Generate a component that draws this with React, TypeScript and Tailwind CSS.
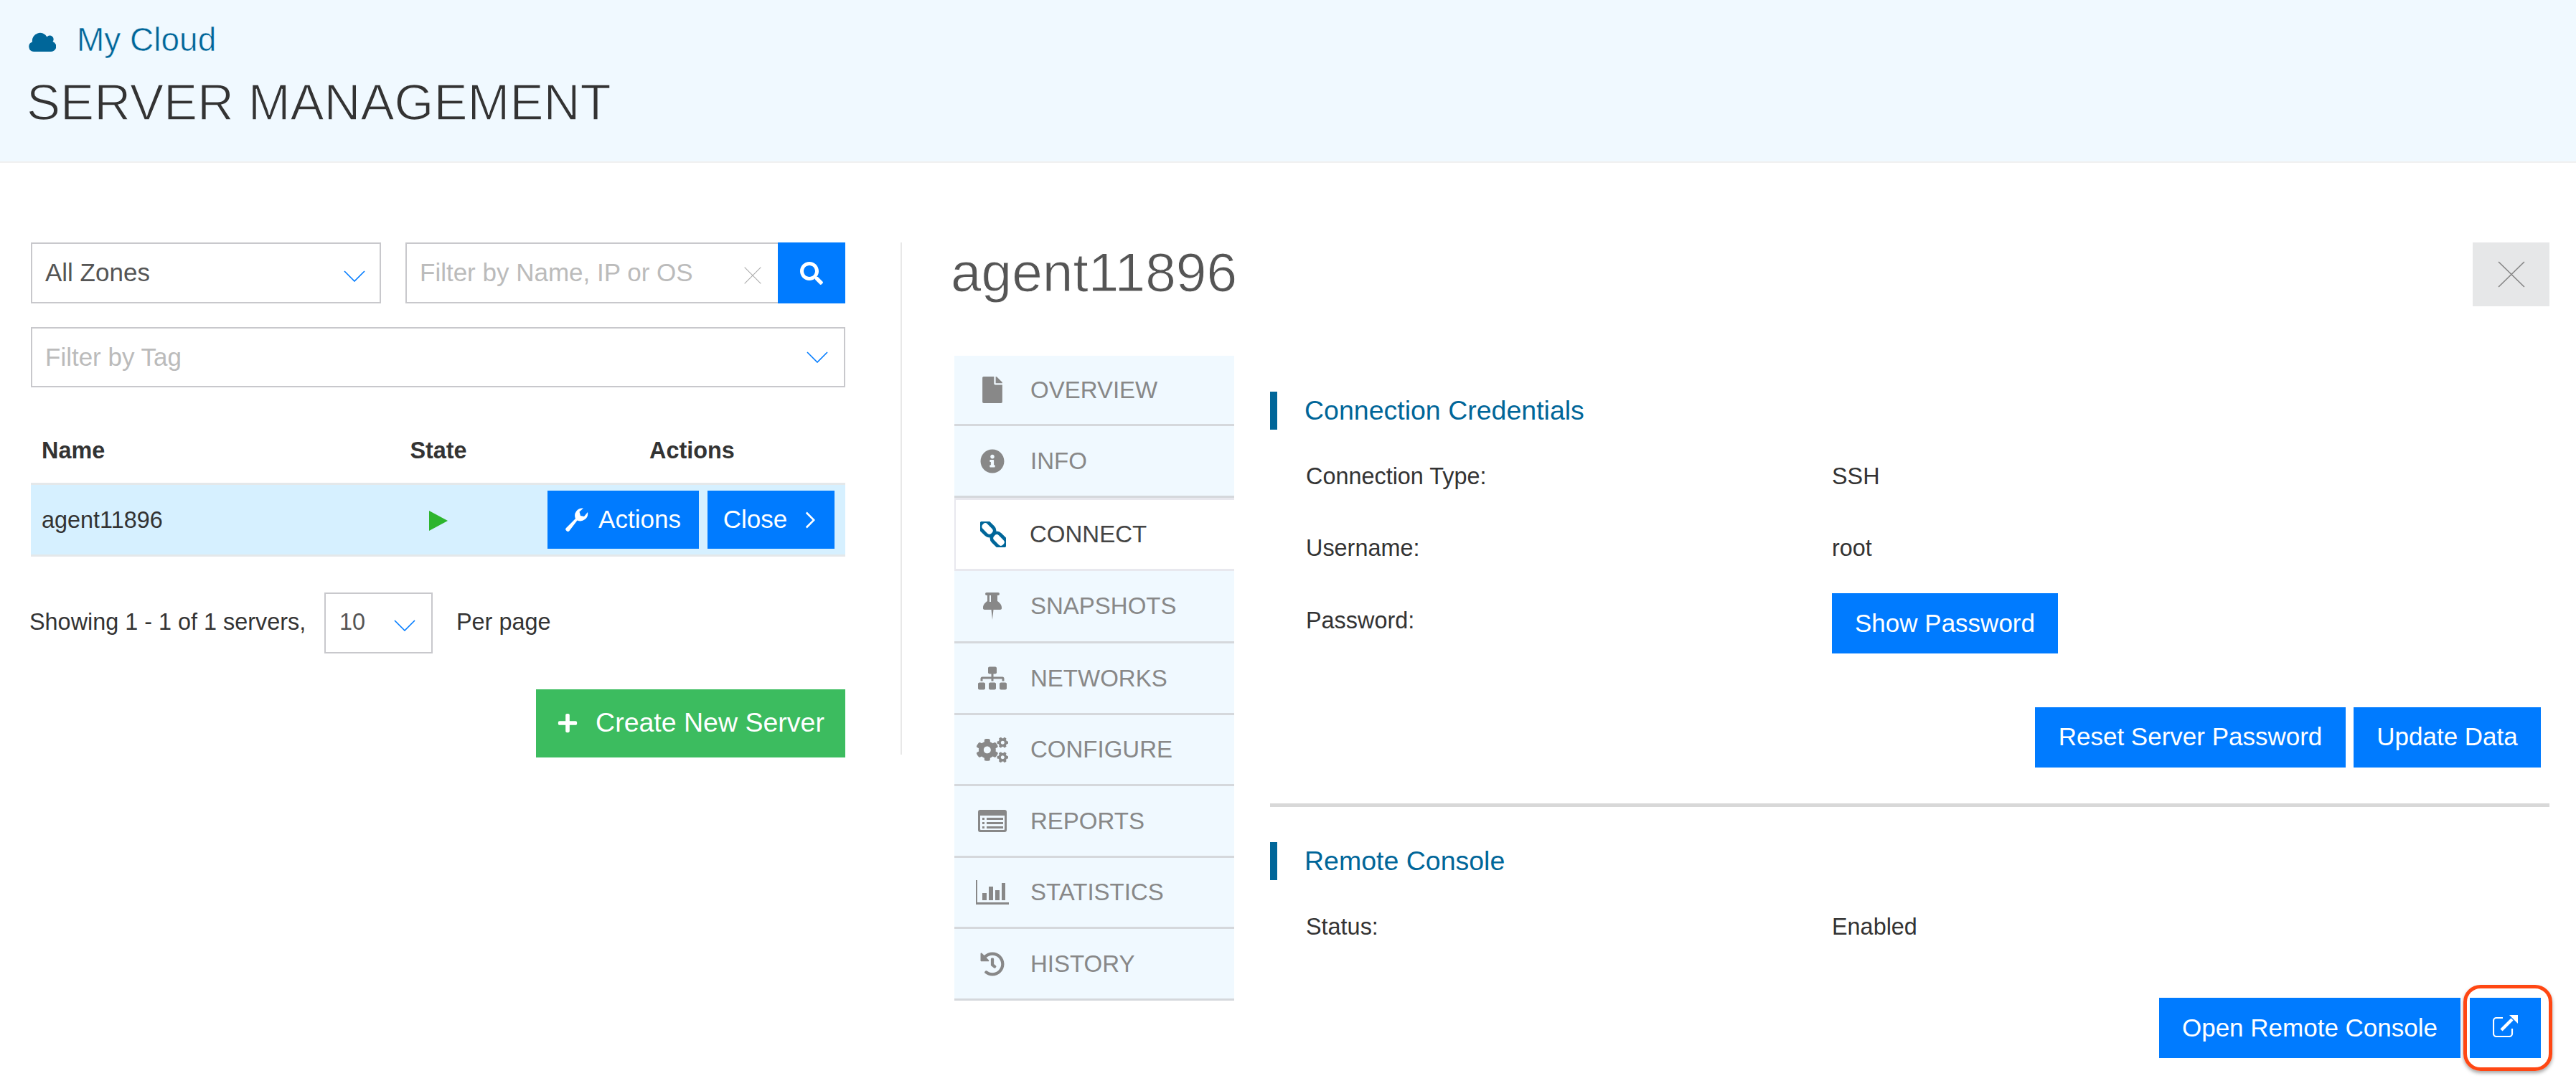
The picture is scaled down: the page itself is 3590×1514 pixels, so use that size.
import type { ReactNode } from "react";
import { FaCogs, FaFile, FaHistory, FaInfoCircle, FaPlus, FaSearch, FaSitemap } from "react-icons/fa";

function Chevron({ className }: { className: string }) {
  return (
    <svg viewBox="0 0 30 16" fill="none" stroke="#007bff" strokeWidth="1.6" className={className}>
      <path d="M1 1 L15 15 L29 1" />
    </svg>
  );
}

function Cross({ className, color }: { className: string; color: string }) {
  return (
    <svg viewBox="0 0 36 36" fill="none" stroke={color} strokeWidth="1.6" className={className} preserveAspectRatio="none">
      <path d="M1 1 L35 35 M35 1 L1 35" />
    </svg>
  );
}

function CloudIcon() {
  return (
    <svg viewBox="0 0 38 28" fill="#006699" className="w-[38px] h-[28px] mt-[5px] ml-[1px]">
      <path d="M7 28 A7 7 0 0 1 5 14.4 A11 11 0 0 1 25.5 7.5 A4.8 4.8 0 0 1 33.5 14 A7.2 7.2 0 0 1 31 28 Z" />
    </svg>
  );
}

function WrenchIcon() {
  return (
    <svg viewBox="0 0 32 33" fill="white" className="w-[32px] h-[33px]">
      <path d="M31 6 A10.5 10.5 0 0 1 16.5 17.5 L5.5 32 A2.5 2.5 0 0 1 2 32.5 L1 31.5 A2.5 2.5 0 0 1 1 28 L14 15 A10.5 10.5 0 0 1 25 0.5 L19.5 5.5 L21 11 L26 12 Z" />
    </svg>
  );
}

function LinkIcon() {
  return (
    <svg viewBox="0 0 36 36" fill="none" stroke="#006699" strokeWidth="4.8" className="w-[36px] h-[36px]">
      <rect x="-1" y="3" width="22" height="14" rx="6.5" transform="rotate(45 10 10)" />
      <rect x="15" y="19" width="22" height="14" rx="6.5" transform="rotate(45 26 26)" />
    </svg>
  );
}

function PinIcon() {
  return (
    <svg viewBox="0 0 26 38" fill="#888888" className="w-[26px] h-[38px]">
      <path fillRule="evenodd" d="M5 0 H21 A2 2 0 0 1 21 4 H20 V12 C23 14 26 17 26 21 A2.5 2.5 0 0 1 24 24 H14.5 L13 38 L11.5 24 H2 A2.5 2.5 0 0 1 0 21 C0 17 3 14 6 12 V4 H5 A2 2 0 0 1 5 0 Z M9 4 V13 H11 V4 Z" />
    </svg>
  );
}

function ListIcon() {
  return (
    <svg viewBox="0 0 40 31" fill="#888888" className="w-[40px] h-[31px]">
      <path fillRule="evenodd" d="M3 0 H37 A3 3 0 0 1 40 3 V28 A3 3 0 0 1 37 31 H3 A3 3 0 0 1 0 28 V3 A3 3 0 0 1 3 0 Z M3 8 V27 A1 1 0 0 0 4 28 H36 A1 1 0 0 0 37 27 V8 Z" />
      <path d="M6 11 H9 V14 H6 Z M6 17 H9 V20 H6 Z M6 23 H9 V26 H6 Z M12 11 H35 V14 H12 Z M12 17 H35 V20 H12 Z M12 23 H35 V26 H12 Z" />
    </svg>
  );
}

function BarsIcon() {
  return (
    <svg viewBox="0 0 46 34" fill="#888888" className="w-[46px] h-[34px]">
      <path d="M0 0 H2 V31 H46 V34 H0 Z" />
      <path d="M9 18 H15 V28 H9 Z M18 9 H24 V28 H18 Z M27 14 H33 V28 H27 Z M36 4 H41 V28 H36 Z" />
    </svg>
  );
}

function ExternalIcon() {
  return (
    <svg viewBox="0 0 36 31" fill="none" className="w-[36px] h-[31px] mb-[5px]">
      <path d="M14 4 H5 A4 4 0 0 0 1 8 V26 A4 4 0 0 0 5 30 H23 A4 4 0 0 0 27 26 V19" stroke="white" strokeWidth="2.2" />
      <path d="M12 21 L27 6" stroke="white" strokeWidth="4.5" />
      <path d="M23 0 H35 V12 Z" fill="white" />
    </svg>
  );
}

function Btn({ children, className }: { children: ReactNode; className: string }) {
  return <div className={`flex items-center justify-center bg-[#007bff] text-white ${className}`}>{children}</div>;
}

const tabs = [
  { label: "OVERVIEW", h: "h-[98px]", icon: <FaFile className="w-[32px] h-[37px]" /> },
  { label: "INFO", h: "h-[100px]", icon: <FaInfoCircle className="w-[34px] h-[34px]" /> },
  { label: "CONNECT", h: "h-[102px]", active: true, icon: <LinkIcon /> },
  { label: "SNAPSHOTS", h: "h-[101px]", icon: <PinIcon /> },
  { label: "NETWORKS", h: "h-[100px]", icon: <FaSitemap className="w-[40px] h-[35px]" /> },
  { label: "CONFIGURE", h: "h-[99px]", icon: <FaCogs className="w-[44px] h-[39px]" /> },
  { label: "REPORTS", h: "h-[100px]", icon: <ListIcon /> },
  { label: "STATISTICS", h: "h-[99px]", icon: <BarsIcon /> },
  { label: "HISTORY", h: "h-[100px]", icon: <FaHistory className="w-[34px] h-[34px]" /> },
];

export default function App() {
  return (
    <div className="h-[1514px] overflow-hidden bg-white font-['Liberation_Sans',Arial,sans-serif] text-[32.4px] text-[#333]">
      {/* Page header */}
      <div className="h-[227px] border-b-2 border-[#f0f0f0] bg-[#f0f9ff] pl-[39px] pt-[26px]">
        <div className="flex items-center h-[58px] text-[#006699]">
          <CloudIcon />
          <span className="ml-[29px] text-[46px] leading-[58px] [-webkit-text-stroke:0.6px_#f0f9ff]">My Cloud</span>
        </div>
        <h1 className="mt-[18px] -ml-[2px] text-[70.6px] leading-[82px] text-[#333] [-webkit-text-stroke:1.4px_#f0f9ff]">SERVER MANAGEMENT</h1>
      </div>

      <div className="flex pt-[111px]">
        {/* Server list */}
        <div className="ml-[43px] w-[1135px] shrink-0">
          <div className="flex">
            <div className="flex items-center justify-between w-[488px] h-[85px] border-2 border-[#c8c8cc] pl-[18px] pr-[20px] text-[35px] text-[#555]">
              <span>All Zones</span>
              <Chevron className="w-[30px] h-[16px] mt-[8px]" />
            </div>
            <div className="flex items-center justify-between ml-[34px] w-[519px] h-[85px] border-2 border-r-0 border-[#c8c8cc] pl-[18px] pr-[23px] text-[35px] text-[#bbb]">
              <span>Filter by Name, IP or OS</span>
              <Cross className="w-[24px] h-[24px] mt-[6px]" color="#aaaaaa" />
            </div>
            <Btn className="w-[94px] h-[85px]">
              <FaSearch className="w-[32px] h-[32px]" />
            </Btn>
          </div>
          <div className="flex items-center justify-between mt-[33px] h-[84px] border-2 border-[#c8c8cc] pl-[18px] pr-[22px] text-[35px] text-[#bbb]">
            <span>Filter by Tag</span>
            <Chevron className="w-[30px] h-[16px]" />
          </div>

          {/* Table */}
          <div className="flex items-center h-[133px] pt-[43px] font-bold">
            <div className="w-[490px] pl-[15px]">Name</div>
            <div className="w-[156px] text-center">State</div>
            <div className="ml-auto w-[415px] pr-[12px] text-center">Actions</div>
          </div>
          <div className="flex items-center h-[103px] border-y-[3px] border-[#e4e8ea] bg-[#d6f0ff]">
            <div className="w-[490px] pl-[15px] pt-[2px]">agent11896</div>
            <div className="flex w-[156px] justify-center pt-[3px]">
              <svg viewBox="0 0 26 28" className="w-[26px] h-[28px]">
                <path d="M0 0 L26 14 L0 28 Z" fill="#2db52d" />
              </svg>
            </div>
            <div className="ml-auto flex gap-[12px] pr-[15px] text-[35px]">
              <Btn className="w-[211px] h-[81px] gap-[14px]">
                <WrenchIcon />
                <span>Actions</span>
              </Btn>
              <Btn className="w-[177px] h-[81px] gap-[25px] pr-[5px]">
                <span>Close</span>
                <svg viewBox="0 0 16 26" fill="none" stroke="white" strokeWidth="3" className="w-[14px] h-[24px]">
                  <path d="M2 1 L14 13 L2 25" />
                </svg>
              </Btn>
            </div>
          </div>

          <div className="flex items-center mt-[50px] -ml-[2px]">
            <span className="w-[411px] pb-[3px]">Showing 1 - 1 of 1 servers,</span>
            <div className="flex items-center justify-between w-[151px] h-[85px] border-2 border-[#c8c8cc] pl-[19px] pr-[22px] text-[#555]">
              <span className="pb-[2px]">10</span>
              <Chevron className="w-[30px] h-[16px] mt-[6px]" />
            </div>
            <span className="ml-[33px] pb-[3px]">Per page</span>
          </div>

          <div className="flex justify-end mt-[50px]">
            <div className="flex items-center justify-center gap-[24px] w-[431px] h-[95px] pb-[2px] bg-[#3cbc5f] text-[37.5px] text-white">
              <FaPlus className="w-[30px] h-[30px]" />
              <span>Create New Server</span>
            </div>
          </div>
        </div>

        <div className="ml-[77px] h-[714px] border-l-2 border-[#e8e8e8]" />

        {/* Server detail */}
        <div className="ml-[70px] w-[2226px]">
          <div className="flex items-center justify-between h-[89px]">
            <h2 className="-ml-[2px] pb-[5px] text-[76.6px] leading-[84px] text-[#555] [-webkit-text-stroke:1px_white]">agent11896</h2>
            <div className="flex items-center justify-center w-[107px] h-[89px] bg-[#e6e7e8]">
              <Cross className="w-[38px] h-[37px]" color="#888888" />
            </div>
          </div>

          <div className="flex mt-[69px] ml-[3px]">
            <div className="w-[390px] shrink-0 self-start">
              {tabs.map((t) => (
                <div
                  key={t.label}
                  className={`flex items-center border-b-[3px] text-[33px] ${t.h} ${t.active ? "border-l-2 border-t-[3px] border-[#e8e8ee] bg-white text-[#444]" : "border-[#d5d8dc] bg-[#f0f9ff] text-[#888]"}`}
                >
                  <div className={`flex shrink-0 justify-center text-[#888] ${t.active ? "w-[103px]" : "w-[106px]"}`}>{t.icon}</div>
                  <span>{t.label}</span>
                </div>
              ))}
            </div>

            <div className="ml-[50px] flex-1 pt-[50px]">
              <div className="flex items-center h-[53px] border-l-[10px] border-[#006699] pl-[38px] text-[37.5px] text-[#006699]">Connection Credentials</div>
              <div className="grid grid-cols-[783px_1fr] pl-[50px] mt-[17px]">
                <div className="flex items-center h-[100px] pb-[4px]">Connection Type:</div>
                <div className="flex items-center h-[100px] pb-[4px] -ml-[50px]">SSH</div>
                <div className="flex items-center h-[100px] pb-[4px]">Username:</div>
                <div className="flex items-center h-[100px] pb-[4px] -ml-[50px]">root</div>
                <div className="flex items-center h-[84px] mt-[11px] pb-[8px]">Password:</div>
                <div className="flex items-center h-[84px] mt-[11px] -ml-[50px]">
                  <Btn className="w-[315px] h-[84px] text-[35px]">Show Password</Btn>
                </div>
              </div>
              <div className="flex justify-end gap-[11px] mt-[75px] pr-[12px] text-[35px]">
                <Btn className="w-[433px] h-[84px] pb-[2px]">Reset Server Password</Btn>
                <Btn className="w-[261px] h-[84px] pb-[2px]">Update Data</Btn>
              </div>
              <div className="mt-[50px] h-[5px] bg-[#d8d8d8]" />
              <div className="flex items-center mt-[49px] h-[53px] border-l-[10px] border-[#006699] pl-[38px] text-[37.5px] text-[#006699]">Remote Console</div>
              <div className="grid grid-cols-[783px_1fr] pl-[50px] mt-[17px]">
                <div className="flex items-center h-[100px] pb-[3px]">Status:</div>
                <div className="flex items-center h-[100px] pb-[3px] -ml-[50px]">Enabled</div>
              </div>
              <div className="flex justify-end gap-[13px] mt-[47px] pr-[12px] text-[35px]">
                <Btn className="w-[420px] h-[84px]">Open Remote Console</Btn>
                <div className="relative">
                  <Btn className="w-[99px] h-[84px]">
                    <ExternalIcon />
                  </Btn>
                  {/* annotation ring drawn over the button */}
                  <div className="absolute -left-[9px] -right-[16px] -top-[18px] -bottom-[18px] rounded-[24px] border-[5px] border-[#ff4713] shadow-[0_3px_5px_rgba(0,0,0,0.35)]" />
                </div>
              </div>
            </div>
          </div>
        </div>
      </div>
    </div>
  );
}
